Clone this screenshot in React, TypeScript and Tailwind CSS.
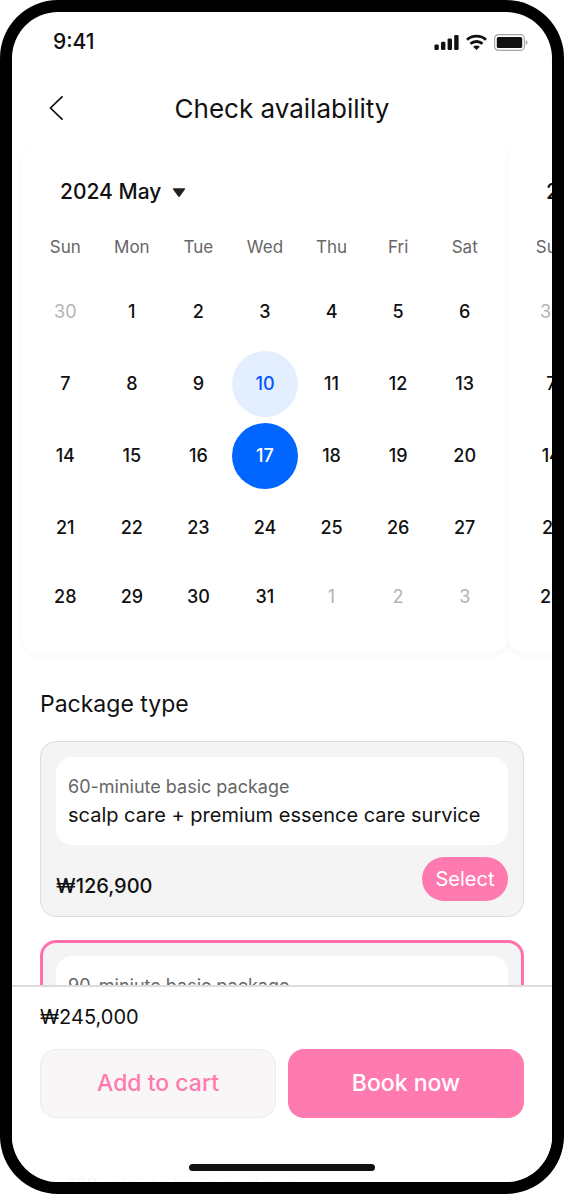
import { useState } from "react";
import { clsx } from "clsx";

const WEEKDAYS = ["Sun", "Mon", "Tue", "Wed", "Thu", "Fri", "Sat"];

const WEEKS = [
  [30, 1, 2, 3, 4, 5, 6],
  [7, 8, 9, 10, 11, 12, 13],
  [14, 15, 16, 17, 18, 19, 20],
  [21, 22, 23, 24, 25, 26, 27],
  [28, 29, 30, 31, 1, 2, 3],
];

const PACKAGES = [
  { id: "60", name: "60-miniute basic package", detail: "scalp care + premium essence care survice", price: "₩126,900" },
  { id: "90", name: "90-miniute basic package", detail: "scalp care + premium essence care survice", price: "₩245,000" },
  { id: "120", name: "120-miniute basic package", detail: "scalp care + premium essence care survice", price: "₩326,900" },
];

const TODAY = 10;

// leading days of the previous month and trailing days of the next one
function isOutside(week: number, day: number) {
  return (week === 0 && day > 7) || (week === WEEKS.length - 1 && day < 7);
}

function StatusBar() {
  return (
    <div className="flex h-[60px] items-center justify-between pl-[41px] pr-6">
      <span className="text-[21px] font-medium">9:41</span>
      <div className="flex items-center gap-[7px]">
        <svg width="25" height="16" viewBox="0 0 25 16" fill="currentColor" aria-hidden="true">
          <rect x="0.4" y="10.5" width="4.4" height="5.5" rx="1.3" />
          <rect x="7" y="7.8" width="4.4" height="8.2" rx="1.3" />
          <rect x="13.6" y="4.4" width="4.4" height="11.6" rx="1.3" />
          <rect x="20.2" y="1" width="4.4" height="15" rx="1.3" />
        </svg>
        <svg width="21" height="16" viewBox="0 0 21 16" fill="none" stroke="currentColor" strokeWidth="2.8" aria-hidden="true">
          <path d="M1 5.8C6.2 0.9 14.8 0.9 20 5.8" />
          <path d="M4.5 9.8C7.8 6.7 13.2 6.7 16.5 9.8" />
          <path d="M7.2 12.7C9 11 12 11 13.8 12.7L10.5 16Z" fill="currentColor" stroke="none" />
        </svg>
        <svg width="34" height="17" viewBox="0 0 34 17" aria-hidden="true">
          <rect x="0.6" y="0.6" width="29.8" height="15.8" rx="4" fill="none" stroke="#a6a6a6" strokeWidth="1.2" />
          <rect x="2.8" y="3" width="25.4" height="11" rx="1.5" fill="currentColor" />
          <path d="M31.8 6v5c1-.4 1.7-1.4 1.7-2.5S32.8 6.4 31.8 6Z" fill="#a6a6a6" />
        </svg>
      </div>
    </div>
  );
}

function MonthCard({ selected, onSelect, current }: {
  selected: number;
  onSelect: (day: number) => void;
  current?: boolean;
}) {
  return (
    <section className="w-[90%] shrink-0 rounded-2xl bg-white px-[10px] pb-[22px] pt-[26px] shadow-[0_2px_6px_rgba(0,0,0,0.04)] first:ml-[10px]">
      <div className="relative mb-[6px] ml-[28px] w-fit">
        <select
          aria-label="Month"
          className="h-11 cursor-pointer appearance-none bg-transparent pr-6 text-[21px] font-medium outline-none"
        >
          <option>2024 May</option>
        </select>
        <svg width="14" height="10" viewBox="0 0 14 10" className="pointer-events-none absolute right-0 top-[18px]" aria-hidden="true">
          <path d="M1.6 1H12.4L7 8.3Z" fill="#222" stroke="#222" strokeWidth="1.4" strokeLinejoin="round" />
        </svg>
      </div>

      <table className="w-full table-fixed">
        <thead>
          <tr className="h-14">
            {WEEKDAYS.map((d) => (
              <th key={d} scope="col" className="p-0 text-[17px] font-normal text-[#666]">{d}</th>
            ))}
          </tr>
        </thead>
        <tbody>
          {WEEKS.map((week, w) => (
            <tr key={w} className="h-[72px] last:h-[66px]">
              {week.map((day) => {
                const outside = isOutside(w, day);
                const isSelected = current && !outside && day === selected;
                const isToday = current && !outside && day === TODAY;
                return (
                  <td key={day} className="p-0">
                    <button
                      type="button"
                      disabled={outside}
                      onClick={() => onSelect(day)}
                      className={clsx(
                        "flex aspect-square w-full items-center justify-center rounded-full text-lg",
                        outside ? "text-[#b4b4b4]" : "font-medium",
                        isSelected && "bg-[#0066ff] text-white",
                        isToday && !isSelected && "bg-[#e3efff] text-[#0055ff]",
                      )}
                    >
                      {day}
                    </button>
                  </td>
                );
              })}
            </tr>
          ))}
        </tbody>
      </table>
    </section>
  );
}

function PackageCard({ item, active, onSelect }: {
  item: (typeof PACKAGES)[number];
  active: boolean;
  onSelect: () => void;
}) {
  return (
    <li
      className={clsx(
        "rounded-2xl bg-[#f4f4f4]",
        active ? "border-3 border-[#ff70ac] p-[13px]" : "border border-[#dcdcdc] p-[15px]",
      )}
    >
      <div className="rounded-2xl bg-white px-3 py-4">
        <p className="text-lg leading-7 text-[#666]">{item.name}</p>
        <p className="truncate text-xl leading-7">{item.detail}</p>
      </div>
      <div className="mt-3 flex items-end justify-between">
        <span className="text-xl font-medium leading-[30px]">{item.price}</span>
        <button
          type="button"
          aria-pressed={active}
          onClick={onSelect}
          className="h-11 w-[86px] rounded-full bg-[#ff7aaf] text-xl text-white"
        >
          Select
        </button>
      </div>
    </li>
  );
}

export default function App() {
  const [day, setDay] = useState(17);
  const [packageId, setPackageId] = useState("90");
  const total = PACKAGES.find((p) => p.id === packageId)?.price;

  return (
    <div className="bg-white">
      <div className="h-screen rounded-[58px] bg-black p-3 font-['Inter',sans-serif] text-[#111]">
        <div className="h-full overflow-x-hidden overflow-y-auto rounded-[46px] bg-white [scrollbar-width:none]">
          <StatusBar />

          <header className="grid h-[72px] grid-cols-[72px_1fr_72px] items-center">
            <button type="button" aria-label="Back" className="flex h-11 items-center pl-[37px]">
              <svg width="15" height="26" viewBox="0 0 15 26" fill="none" stroke="currentColor" strokeWidth="1.7" aria-hidden="true">
                <path d="M13.5 1.3L1.5 13L13.5 24.7" />
              </svg>
            </button>
            <h1 className="text-center text-[26px]">Check availability</h1>
          </header>

          {/* Months, swiped sideways */}
          <div className="flex overflow-x-auto pb-4 [scrollbar-width:none]">
            <MonthCard selected={day} onSelect={setDay} current />
            <MonthCard selected={day} onSelect={setDay} />
          </div>

          <section className="px-7 pb-6 pt-[19px]">
            <h2 className="mb-[21px] text-[23px] leading-8">Package type</h2>
            <ul className="flex flex-col gap-[23px]">
              {PACKAGES.map((p) => (
                <PackageCard key={p.id} item={p} active={p.id === packageId} onSelect={() => setPackageId(p.id)} />
              ))}
            </ul>
          </section>

          {/* Checkout bar */}
          <footer className="sticky bottom-0">
            <div className="border-t-2 border-[#dcdcdc] bg-white px-7 pb-5 pt-[15px]">
              <p className="text-xl leading-[30px]">{total}</p>
              <div className="mt-[17px] grid grid-cols-2 gap-3">
                <button
                  type="button"
                  className="h-[69px] rounded-2xl border border-[#ececec] bg-[#f8f6f7] text-[23px] font-medium text-[#ff7aaf]"
                >
                  Add to cart
                </button>
                <button type="button" className="h-[69px] rounded-2xl bg-[#ff7aaf] text-[23px] font-medium text-white">
                  Book now
                </button>
              </div>
            </div>
            <div className="flex h-11 justify-center bg-white/95 pt-[26px]">
              <div className="h-[7px] w-[186px] rounded-full bg-[#111]" />
            </div>
          </footer>
        </div>
      </div>
    </div>
  );
}
